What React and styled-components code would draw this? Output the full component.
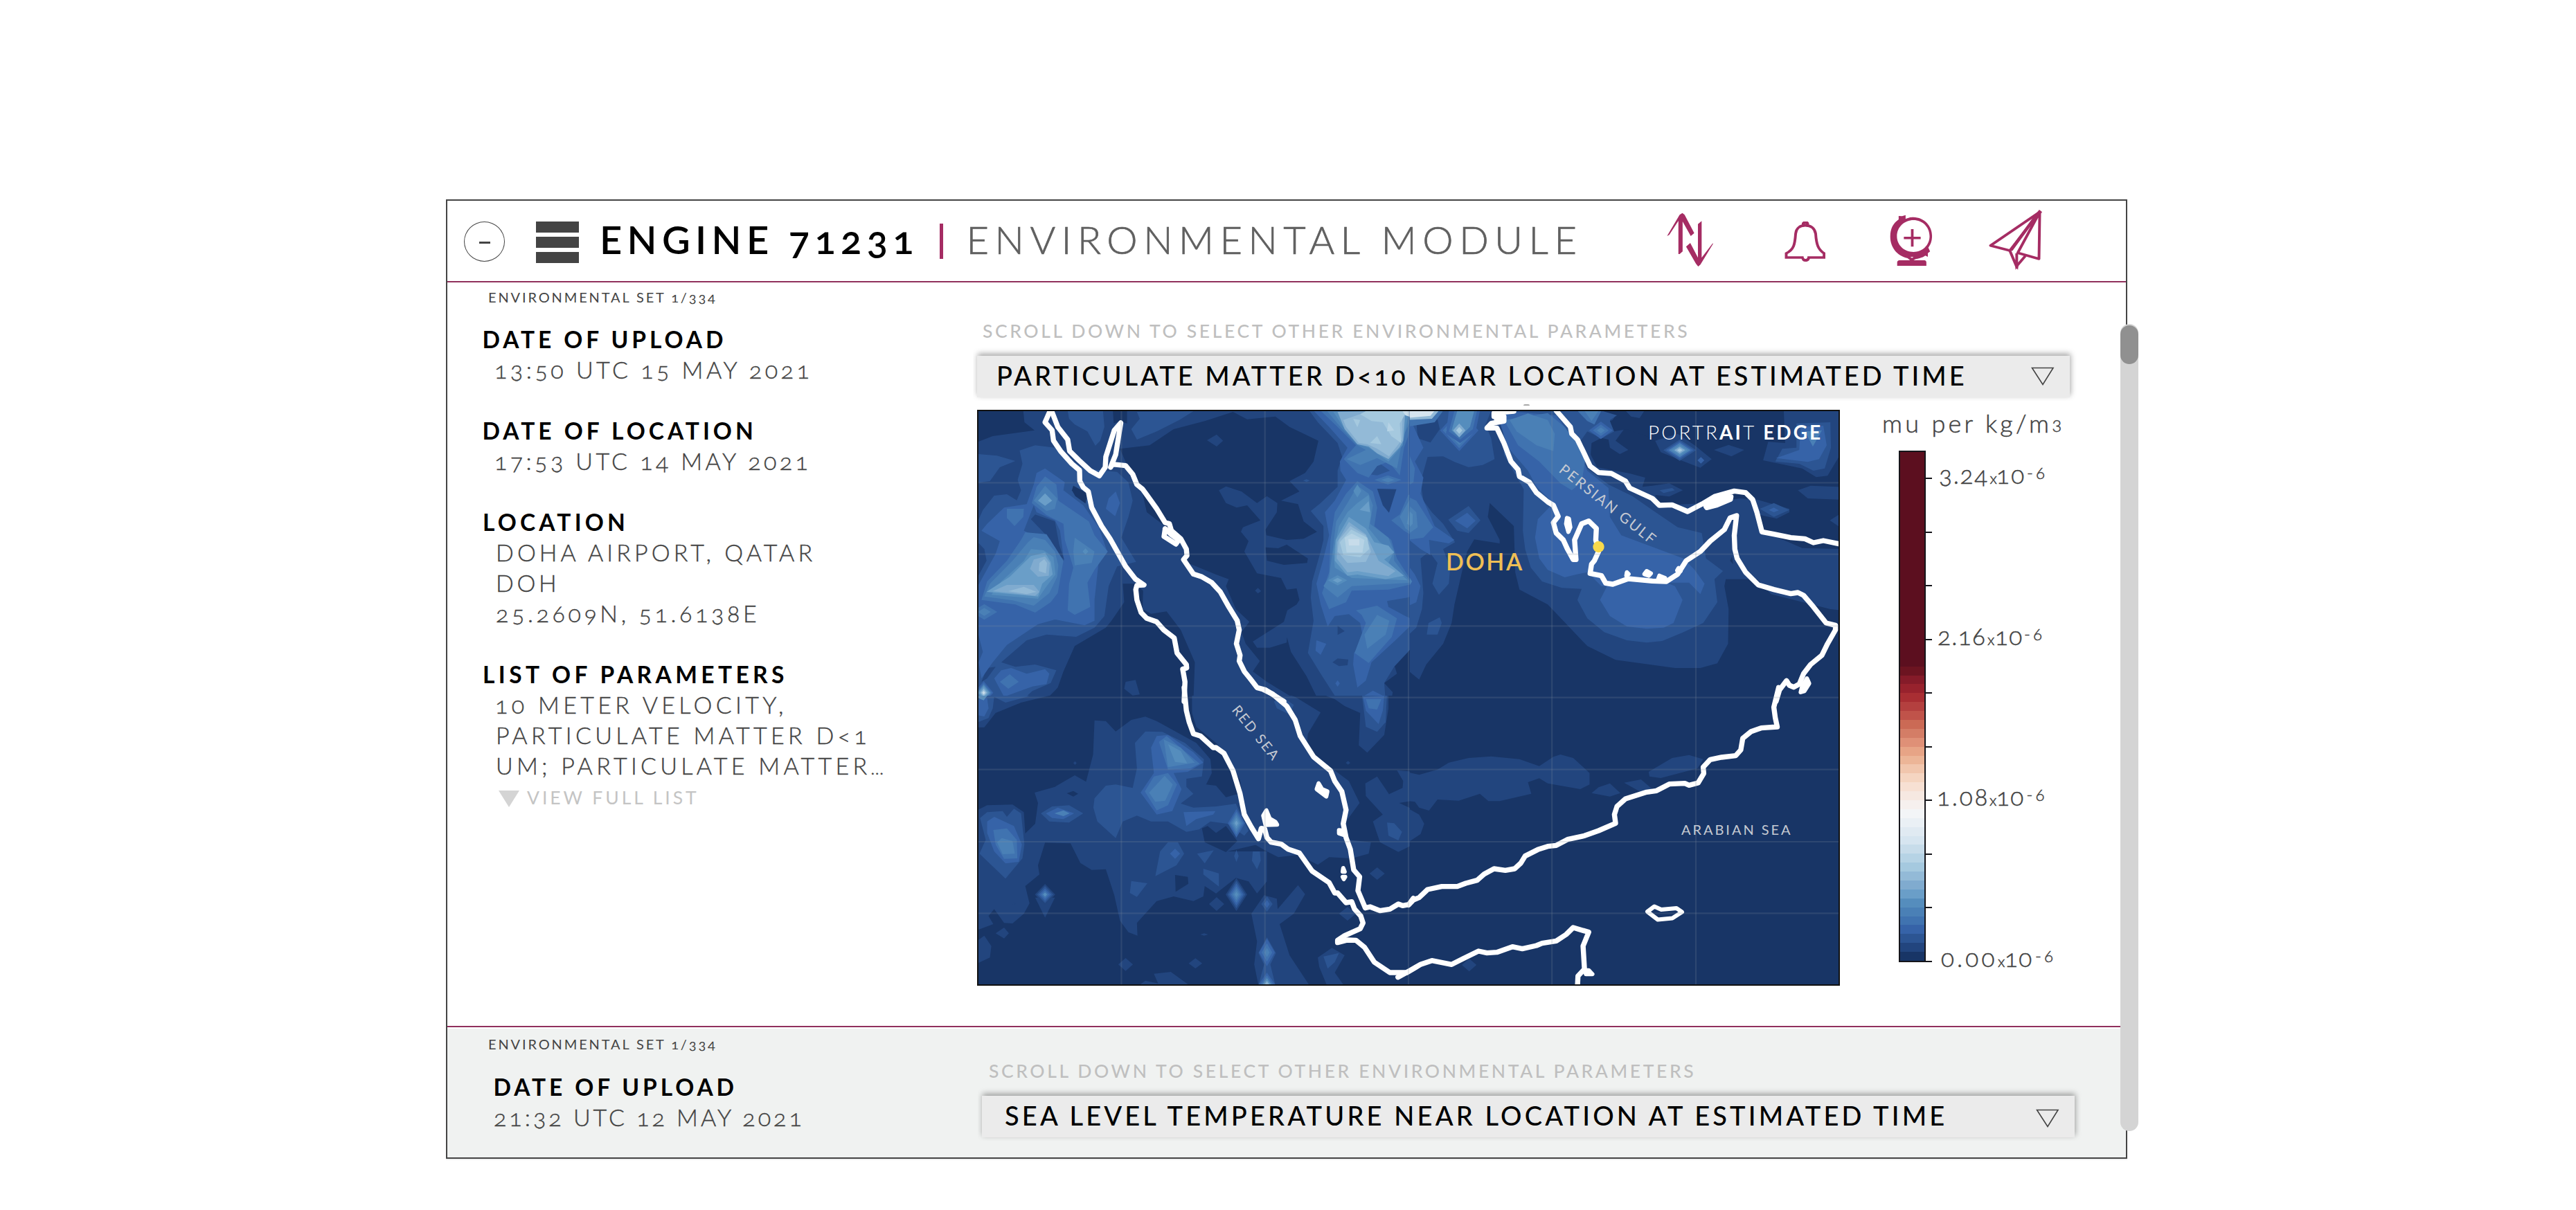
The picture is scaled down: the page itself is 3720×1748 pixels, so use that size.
import React from "react";
import styled, { createGlobalStyle } from "styled-components";

const Global = createGlobalStyle`
  *, *::before, *::after { box-sizing: border-box; }
  body { margin: 0; background: #fff; }
`;

const FONT = 'Lato, "Open Sans", sans-serif';
const MAGENTA = "#a52c63";
const RULE = "#90305c";
const INK = "#444";

const Page = styled.main`
  width: 3720px;
  height: 1748px;
  padding: 288px 0 0 644px;
  overflow: hidden;
  background: #fff;
  font-family: ${FONT};
  font-variant-numeric: oldstyle-nums;
  font-kerning: normal;
`;

const Card = styled.section`
  position: relative;
  display: flex;
  flex-direction: column;
  width: 2428px;
  height: 1386px;
  border: 2px solid ${INK};
  box-shadow: 0 2px 0 #f0f1f1;
`;

const Text = styled.span`
  display: block;
  flex: none;
  width: ${(p) => (p.$width ? `${p.$width}px` : "max-content")};
  white-space: pre;
  font-size: ${(p) => p.$size}px;
  line-height: ${(p) => p.$line || 44}px;
  font-weight: ${(p) => p.$weight || 400};
  letter-spacing: ${(p) => p.$track || 0}px;
  color: ${(p) => p.$color || INK};
  -webkit-text-stroke: ${(p) => p.$stroke || 0}px currentColor;
  margin: ${(p) => p.$top || 0}px 0 0 ${(p) => p.$left || 0}px;
`;

const Header = styled.header`
  display: flex;
  align-items: flex-start;
  height: 118px;
  padding-left: 24px;
  border-bottom: 2px solid ${RULE};
`;

const Collapse = styled.button`
  display: grid;
  place-items: center;
  width: 59px;
  height: 58px;
  margin: 30px 45px 0 0;
  padding: 0;
  border: 1.5px solid ${INK};
  border-radius: 50%;
  background: none;
  &::after {
    content: "";
    width: 16px;
    height: 3px;
    margin-top: 3px;
    background: ${INK};
  }
`;

const Burger = styled.div`
  display: grid;
  gap: 6px;
  width: 62px;
  margin-top: 30px;
`;

const BurgerBar = styled.i`
  height: 16px;
  background: ${INK};
`;

const Divider = styled.i`
  width: 5px;
  height: 51px;
  margin: 33px 0 0 ${(p) => p.$left}px;
  background: ${MAGENTA};
`;

const Icons = styled.nav`
  display: flex;
  margin: 13px 0 0 ${(p) => p.$left}px;
`;

const IconSvg = styled.svg`
  flex: none;
  margin-right: ${(p) => p.$gap}px;
  color: ${MAGENTA};
`;

const Panel = styled.div`
  display: flex;
  height: ${(p) => p.$height}px;
  background: ${(p) => p.$bg || "#fff"};
`;

const SectionRule = styled.div`
  height: 4px;
  border-top: 2px solid ${RULE};
`;

const Details = styled.div`
  flex: none;
  width: ${(p) => p.$width}px;
  padding-top: ${(p) => p.$top}px;
`;

const Fields = styled.div`
  display: grid;
  row-gap: 44px;
  margin-top: ${(p) => p.$top}px;
`;

const Block = styled.section`
  display: flex;
  flex-direction: column;
`;

const Ellipsis = styled.span`
  font-size: 26px;
  line-height: 0;
  letter-spacing: 0;
`;

const MoreRow = styled.div`
  display: flex;
  align-items: flex-start;
  height: 44px;
  padding-left: 74px;
`;

const MoreArrow = styled.svg`
  margin-top: 14px;
`;

const Data = styled.div`
  display: flex;
  flex-direction: column;
  padding-top: ${(p) => p.$top}px;
`;

const Select = styled.div`
  display: flex;
  justify-content: space-between;
  width: 1578px;
  height: 60px;
  margin-top: 20px;
  padding-right: 22px;
  background: #ebebeb;
  box-shadow: 1px -3px 8px rgba(0, 0, 0, 0.36);
  clip-path: inset(-14px -10px -6px -6px);
`;

const CaretSvg = styled.svg`
  margin-top: ${(p) => p.$top}px;
`;

const Chart = styled.div`
  position: relative;
  display: flex;
  margin-top: 18px;
  &::before {
    content: "";
    position: absolute;
    left: 789px;
    top: -8px;
    width: 9px;
    height: 2px;
    border-radius: 2px 2px 0 0;
    background: #a8a8a8;
  }
`;

const MapSvg = styled.svg`
  display: block;
  flex: none;
  width: 1246px;
  height: 832px;
  border: 2px solid #111;
  background: #183566;
`;

const Legend = styled.aside`
  display: flex;
  flex-direction: column;
  padding-left: 61px;
`;

const LegendTitle = styled.div`
  display: flex;
  height: 59px;
`;

const Scale = styled.div`
  display: flex;
  margin-left: 24px;
`;

const Bar = styled.div`
  display: flex;
  flex-direction: column;
  width: 39px;
  height: 739px;
  border: 2px solid #15151a;
`;

const Band = styled.i`
  flex: ${(p) => p.$grow} 0 0;
  background: ${(p) => p.$color};
`;

const Ticks = styled.div`
  display: flex;
  flex-direction: column;
  justify-content: space-between;
  padding-top: 40px;
  height: 738px;
`;

const Tick = styled.div`
  display: flex;
  align-items: center;
  height: 0;
  &::before {
    content: "";
    flex: none;
    width: 9px;
    height: 2px;
    background: #15151a;
  }
`;

const TickLabel = styled.div`
  display: flex;
  height: 44px;
  margin-bottom: 12px;
  align-items: flex-start;
`;

const Track = styled.div`
  position: absolute;
  top: 178px;
  right: -18px;
  width: 26px;
  height: 1166px;
  border-radius: 13px;
  background: #d4d4d4;
`;

const Thumb = styled.div`
  width: 26px;
  height: 56px;
  margin-top: 2px;
  border-radius: 13px;
  background: #909090;
`;

/* ---------- colour scale ---------- */
const BANDS = [
  "#6c1421", "#851b29", "#98222d", "#a92e33", "#b4403f", "#c0534a", "#cb6a55", "#d47d66",
  "#df9077", "#e7a486", "#ecb597", "#f1c6ad", "#f5d5c1", "#f7e0d3", "#f6e8e1", "#f6f0ee",
  "#f3f5f7", "#eaf0f5", "#e0eaf2", "#d6e5f0", "#c7dcea", "#b6d3e5", "#a5c9df", "#93bad7",
  "#80abcf", "#6a9ec8", "#558dbd", "#4a80b6", "#4073b0", "#3663a8", "#2c5593", "#22457e",
  "#183566",
];
const level = (n) => BANDS[BANDS.length - 1 - n];

/* ---------- contour data: one list per sheet of the map ---------- */
const dia = (cx, cy, rx, ry, levels) =>
  levels.map((l, i) => {
    const k = 1 - i / levels.length;
    return [l, `${cx - rx * k},${cy} ${cx},${cy - ry * k} ${cx + rx * k},${cy} ${cx},${cy + ry * k}`];
  });

const NW = [
  [1, "0,0 1568,0 1568,1300 0,1300"],
  [0, "27,40 188,40 192,90 228,125 80,150 27,175"],
  [0, "930,45 980,77 1080,65 1130,110 1232,170 1215,260 1185,310 1130,345 1165,390 1100,430 1160,445 1180,520 1227,565 1180,595 1120,600 1048,580 1045,555 1085,480 1087,440 1050,410 1015,440 960,390 905,368 880,385 905,440 943,460 980,450 1027,515 965,545 958,565 985,605 970,650 1015,745 1100,765 1120,815 1155,810 1165,860 1155,880 1122,905 1110,955 1000,1040 1015,1067 1060,1067 1120,1045 1121,1022 1135,1085 1190,1190 1230,1290 1150,1290 1050,1215 1000,1170 1025,1125 975,1050 960,1000 988,955 940,900 905,800 915,770 870,750 770,700 760,610 710,560 625,480 610,400 560,290 530,205 635,190 720,120 830,85"],
  [0, "540,790 545,870 500,950 480,980 370,1060 330,1170 310,1240 270,1290 790,1290 795,1130 745,990 695,910 640,920 610,900 612,820 580,790"],
  [0, "1568,1060 1500,1140 1510,1180 1465,1220 1495,1260 1490,1300 1568,1300"],
  [1, "838,168 872,143 895,170 872,195"],
  [1, "1008,820 1018,808 1030,822 1018,832"],
  [0, "1045,632 1090,636 1120,620 1195,680 1192,700 1110,708 1050,690"],
  [1, "550,1215 585,1207 600,1270 575,1274 545,1245"],
  [2, "27,228 95,235 160,258 105,285 70,345 27,352"],
  [2, "175,212 230,190 300,200 400,290 520,305 560,350 575,430 560,500 535,590 587,695 520,715 490,800 475,930 440,980 375,1020 270,1010 200,1035 110,1130 160,1150 230,1140 305,1165 285,1220 220,1255 180,1300 27,1300 27,520 45,470 85,408 130,402 165,428 180,385 168,340 185,270"],
  [1, "27,610 50,640 58,690 27,760"],
  [1, "27,990 50,998 27,1015"],
  [1, "60,1155 90,1150 60,1200 40,1215"],
  [2, "345,40 470,40 475,110 460,170 443,192 415,130 370,100 350,75"],
  [2, "600,75 590,45 790,42 740,80 660,130 590,165 570,120"],
  [0, "505,40 555,40 555,95 530,85 508,95"],
  [0, "365,365 395,385 415,400 408,442 372,410 360,385"],
  [3, "265,290 335,350 330,385 400,450 455,545 485,650 455,690 440,860 440,950 405,970 300,945 240,965 130,1055 80,1130 40,1200 30,1130 45,1085 27,1000 27,800 90,660 105,605 40,560 60,530 120,460 200,445 225,360 235,310"],
  [2, "225,450 235,480 300,515 318,560 332,690 300,720 265,660 262,600 190,560"],
  [1, "215,510 230,490 300,520 315,620 333,686 305,655 285,600"],
  [3, "515,390 530,440 513,497 480,465 490,420"],
  [4, "265,325 305,360 312,430 420,520 440,580 487,650 440,730 415,785 425,890 370,925 345,905 350,790 365,720 335,600 330,530 270,492 218,440 235,370"],
  [4, "130,465 190,465 188,500 157,540 130,505"],
  [4, "195,567 270,575 310,650 330,690 320,760 310,830 285,870 230,915 160,880 40,860 60,780 130,690 180,600"],
  [5, "225,588 265,600 300,650 312,710 308,760 280,830 225,885 150,862 50,845 70,790 150,690 205,610"],
  [5, "370,590 440,650 430,700 370,710 365,650"],
  [5, "265,365 308,420 300,465 270,475 225,430"],
  [6, "260,645 295,675 302,750 265,810 240,855 75,838 110,780 190,690 215,640"],
  [7, "265,655 285,695 292,750 255,790 240,845 58,825 140,760 215,670"],
  [7, "265,398 290,430 265,452 240,430"],
  [8, "265,672 282,700 278,755 240,760 212,725 225,685"],
  [8, "80,822 130,795 225,795 245,825 230,842"],
  [9, "262,683 272,700 268,745 243,735 245,700"],
  [9, "135,822 190,803 235,825 200,835"],
  ...dia(50, 912, 46, 34, [4, 5]),
  ...dia(408, 650, 10, 14, [6]),
  [3, "85,1200 110,1165 145,1155 200,1180 265,1160 280,1180 270,1225 220,1235 120,1280"],
  [4, "105,1215 140,1182 172,1215 135,1245"],
  ...dia(48, 1262, 34, 50, [3, 4, 6, 7, 9, 12]),
  [2, "1200,40 1230,90 1300,180 1316,240 1300,300 1300,370 1240,440 1205,475 1250,540 1250,600 1240,650 1210,780 1205,850 1215,950 1195,1090 1240,1180 1290,1275 1350,1300 1470,1300 1465,1220 1500,1150 1568,1060 1568,40"],
  [3, "1215,40 1270,110 1335,200 1308,260 1310,300 1330,340 1290,430 1255,480 1270,580 1250,680 1225,790 1240,880 1265,975 1290,930 1340,922 1380,960 1392,1040 1358,1090 1355,1140 1370,1240 1400,1210 1420,1130 1500,1040 1568,960 1568,40"],
  [1, "1440,378 1508,380 1482,482 1460,450"],
  [1, "1300,972 1325,995 1300,1012"],
  [1, "1282,1130 1300,1114 1338,1118 1335,1143 1305,1147"],
  [2, "1475,865 1568,845 1568,945 1540,930 1480,890"],
  [2, "1440,260 1485,300 1440,320 1410,315"],
  [3, "1225,1035 1260,1050 1240,1098 1222,1080"],
  ...dia(1300, 1222, 8, 14, [3]),
  ...dia(1190, 343, 12, 6, [2]),
  [3, "1395,1275 1425,1253 1460,1275 1460,1300 1395,1300"],
  [4, "1240,40 1300,110 1365,190 1322,250 1370,310 1410,330 1440,280 1480,260 1520,320 1535,200 1550,150 1568,40"],
  [4, "1370,345 1425,390 1440,460 1430,540 1490,600 1510,680 1568,790 1480,815 1350,820 1330,870 1270,900 1245,830 1270,740 1275,600 1290,480 1330,400"],
  ...dia(1478, 340, 48, 20, [4, 5]),
  [5, "1262,40 1310,110 1370,190 1400,210 1332,250 1380,275 1440,245 1510,290 1532,150 1568,60 1568,40"],
  [5, "1370,365 1410,400 1425,450 1415,530 1480,590 1500,650 1500,690 1560,785 1350,800 1300,850 1250,800 1270,760 1283,640 1295,520 1340,430"],
  [6, "1285,45 1320,110 1370,185 1410,200 1450,235 1480,260 1530,190 1550,60 1568,40"],
  [6, "1335,480 1370,440 1410,405 1418,490 1410,550 1450,610 1500,650 1480,700 1548,775 1350,765 1290,720 1285,650 1305,540"],
  ...dia(1370, 388, 14, 28, [6]),
  [7, "1340,500 1400,550 1430,610 1480,625 1500,655 1465,685 1535,755 1470,770 1370,750 1335,755 1290,690 1293,600"],
  [7, "1410,432 1415,480 1378,470"],
  ...dia(1300, 775, 34, 22, [6, 7]),
  [8, "1340,522 1400,575 1430,650 1445,690 1505,735 1480,757 1370,735 1335,740 1297,680 1298,610"],
  [9, "1345,540 1400,580 1418,650 1400,695 1335,700 1300,650 1305,600"],
  [10, "1348,555 1405,590 1412,640 1380,675 1320,665 1308,610"],
  [11, "1350,572 1395,600 1388,655 1332,655 1325,590"],
  [12, "1338,596 1377,596 1377,624 1340,624"],
  [8, "1300,45 1540,40 1532,170 1518,200 1480,250 1440,225 1410,195 1370,185 1325,120"],
  [9, "1320,80 1380,55 1530,45 1528,165 1482,238 1440,205 1405,185 1375,180 1330,110"],
  [10, "1380,55 1400,42 1545,42 1520,95 1525,180 1490,150 1460,90 1420,85"],
  [10, "1355,75 1380,80 1370,112"],
  [10, "1440,150 1455,185 1415,180"],
  [11, "1480,90 1500,125 1475,130"],
  [12, "1530,42 1568,42 1568,72 1540,60"],
  [4, "1550,405 1568,400 1568,585 1535,560 1490,515 1520,490"],
  [5, "1555,425 1568,425 1568,575 1540,550 1520,500"],
  [6, "1555,460 1568,455 1568,545 1545,530"],
  [4, "1365,905 1440,885 1510,940 1492,1020 1410,1133 1360,1090 1400,960 1385,925"],
  [5, "1440,925 1483,950 1470,1010 1405,1072 1395,1010"],
];

const NE = [
  [0, "0,0 1568,0 1568,1300 0,1300"],
  [1, "0,40 690,40 740,60 720,100 770,120 740,170 785,210 755,228 720,200 715,165 690,158 655,180 652,230 675,285 790,312 845,330 835,370 870,365 930,355 978,385 930,412 880,405 900,450 1070,440 1180,420 1240,425 1355,465 1355,480 1310,508 1245,490 1260,560 1400,635 1568,640 1568,908 1500,900 1290,835 1240,770 1130,770 1125,800 1140,900 1138,1050 1100,1135 1040,1155 950,1155 740,1120 640,1060 570,970 500,880 400,815 385,740 380,540 295,440 288,500 330,600 330,615 240,598 215,650 200,720 170,880 160,960 130,1050 70,1140 45,1205 0,1160"],
  [2, "0,40 300,40 280,100 300,160 312,250 270,275 220,285 170,262 130,238 75,240 50,350 60,430 90,480 130,530 172,610 130,640 155,720 150,790 115,838 92,790 110,700 80,650 50,680 60,830 55,900 35,980 0,1020"],
  [1, "35,85 110,78 118,120 85,178 40,160"],
  [2, "340,40 690,40 745,60 720,80 735,130 690,160 640,130 605,190 640,290 715,360 800,410 870,470 960,545 1045,570 1060,680 1120,735 1090,770 1100,870 1050,960 980,1000 905,1038 850,1045 780,1035 700,1000 640,940 605,860 620,812 550,808 480,780 440,720 420,640 412,560 415,380 345,230"],
  [3, "330,90 360,200 430,300 460,370 520,440 465,510 455,590 470,680 500,730 560,762 600,750 640,740 690,800 710,800 685,860 720,930 780,975 850,985 910,980 945,960 977,860 950,800 920,785 1000,785 1040,835 1055,790 1020,730 980,680 870,630 760,580 720,500 715,375 640,300 600,180 530,60 340,40"],
  [4, "345,80 500,50 560,110 615,200 632,260 620,350 585,385 545,355 470,260 395,190"],
  [5, "365,80 430,52 500,80 525,140 520,215 460,190 390,130"],
  ...dia(187, 125, 68, 90, [3, 4, 5, 6, 7, 9, 10]),
  [3, "150,40 260,40 245,130 190,180 140,140"],
  [4, "170,40 250,40 235,120 190,165 150,130"],
  [6, "180,40 240,40 225,110 187,155 160,125"],
  ...dia(187, 125, 22, 30, [8, 10]),
  [2, "148,512 220,453 262,515 220,570 180,560"],
  [3, "172,517 215,482 245,517 215,550"],
  [3, "0,40 60,200 30,260 60,330 50,400 100,540 170,600 150,615 80,600 85,665 50,640 0,590"],
  [3, "0,700 30,750 50,800 35,870 0,890"],
  [4, "0,200 30,290 25,350 0,370"],
  [4, "0,410 35,430 95,545 60,590 0,600"],
  [5, "0,440 35,480 40,545 0,580"],
  [6, "0,460 22,490 22,530 0,560"],
  [5, "0,740 20,780 0,820"],
  [2, "72,1010 78,960 118,935 125,960 110,1010"],
  [4, "0,40 130,40 100,90 0,110"],
  [9, "0,40 115,40 90,75 0,80"],
  [13, "0,40 100,40 85,62 0,72"],
  [4, "605,40 690,40 665,100 640,85"],
  [5, "630,40 680,40 655,85"],
  ...dia(688, 125, 42, 38, [3, 4, 5]),
  [0, "745,40 1335,40 1335,150 960,135 870,160 780,120 735,130 720,85 755,70"],
  [1, "880,170 960,140 1020,190 1080,250 1040,287 960,250 900,220"],
  ...dia(967, 211, 58, 46, [2, 3, 5, 6, 8, 10]),
  ...dia(1042, 255, 12, 14, [3]),
  [1, "1088,210 1140,188 1195,210 1150,238"],
  [1, "775,40 842,40 825,72 795,65"],
  [1, "1335,40 1530,40 1530,240 1490,322 1450,328 1400,290 1262,255 1280,175 1340,180"],
  [2, "1380,95 1500,90 1502,200 1480,290 1440,300 1390,270 1305,260 1330,205 1380,200"],
  [3, "1395,110 1475,105 1487,190 1460,250 1420,262 1308,245 1390,210"],
  [5, "1410,130 1470,125 1438,195"],
  [1, "1385,385 1430,365 1530,370 1530,425 1420,420"],
  [1, "1498,515 1530,490 1530,542"],
  [2, "1250,465 1300,440 1355,470 1300,500"],
  [3, "1282,470 1300,460 1318,472 1300,480"],
  [2, "895,385 940,375 950,385 910,397"],
  [0, "1145,690 1152,672 1156,705"],
];

const SW = [
  [0, "0,0 1568,0 1568,1300 0,1300"],
  [1, "785,0 1100,0 1150,20 1240,88 1195,180 1190,240 1280,330 1340,385 1378,480 1330,560 1340,640 1418,650 1410,700 1350,720 1270,715 1230,748 1160,705 1090,715 1050,690 1000,655 1000,600 970,500 955,380 910,280 870,220 800,150 785,90"],
  [1, "440,122 480,125 515,170 570,120 620,106 660,125 800,220 850,290 855,350 835,400 870,405 905,455 950,440 975,560 1020,600 1035,655 910,690 1050,690 1050,820 1015,872 985,820 940,805 870,872 830,840 825,885 790,905 720,885 660,905 590,1000 592,1055 560,1040 530,990 510,880 480,767 430,770 390,740 355,655 265,652 240,750 245,790 195,840 210,915 190,960 150,1002 120,1000 85,940 65,970 82,1005 27,1030 27,510 60,490 150,487 190,520 195,612 230,570 240,480 228,435 300,410 370,360 410,388 435,270"],
  [0, "820,590 840,580 870,610 905,580 945,645 905,693 830,650"],
  [0, "725,792 770,800 772,830 727,865"],
  [0, "342,438 365,428 382,440 365,452"],
  [1, "27,0 300,0 290,12 180,45 90,90 50,152 27,152"],
  [2, "27,0 240,0 200,20 125,45 85,20 80,70 65,112 27,130"],
  [3, "27,30 60,25 65,70 50,105 27,100"],
  [6, "27,0 70,0 48,35 27,25"],
  [2, "436,500 440,460 480,405 515,400 575,415 590,330 583,220 620,170 680,172 760,220 827,290 820,365 765,375 765,410 790,440 745,482 790,500 870,495 940,483 985,600 970,622 910,570 850,560 810,595 765,605 700,560 640,560 590,535 540,560 515,632 450,560"],
  [3, "640,240 660,190 700,185 790,260 825,305 770,345 720,350 748,420 715,515 660,530 603,435 650,350"],
  [4, "668,215 695,190 812,310 780,330 700,335"],
  [5, "685,205 745,240 795,305 700,325"],
  [6, "700,225 745,255 768,308 725,302"],
  [4, "618,430 650,365 700,350 732,400 700,490 660,512"],
  [5, "633,435 688,362 717,400 690,470 655,475"],
  [3, "755,520 868,515 860,530 800,550 765,580"],
  ...dia(942, 568, 30, 62, [3, 4, 5, 6, 7]),
  [2, "250,525 290,495 350,490 400,525 350,565 280,560"],
  [3, "268,525 310,500 368,525 330,550 290,545"],
  [5, "298,525 330,512 352,525 330,537"],
  [2, "35,545 60,520 115,515 130,540 155,505 180,525 192,660 185,720 125,808 33,700 55,640"],
  [3, "60,560 85,540 155,580 183,660 172,735 125,742 85,690 60,610"],
  [4, "82,597 130,590 165,640 167,720 120,722 90,660"],
  [5, "112,632 150,645 158,700 115,702 95,650"],
  [1, "230,890 300,890 265,977"],
  ...dia(265, 877, 36, 46, [1, 2, 3, 4, 6]),
  ...dia(942, 877, 38, 72, [1, 2, 3, 4, 5, 6]),
  [2, "672,690 700,650 735,650 757,700 730,750 655,797"],
  ...dia(725, 700, 18, 22, [3]),
  [2, "565,870 570,818 627,828 590,887"],
  [2, "803,700 862,685 830,742"],
  [2, "825,765 880,785 880,842 825,790"],
  [2, "1000,690 1025,690 1028,730 1015,768 997,730"],
  ...dia(942, 710, 8, 26, [2]),
  ...dia(872, 918, 27, 30, [1]),
  ...dia(1440, 786, 27, 27, [1]),
  ...dia(1335, 960, 30, 30, [1]),
  ...dia(1337, 306, 8, 8, [1]),
  ...dia(371, 307, 6, 8, [1]),
  ...dia(154, 917, 7, 7, [1]),
  [1, "90,1045 120,1020 137,1045 120,1067"],
  [1, "27,1075 50,1055 75,1100 70,1150 27,1174"],
  ...dia(550, 1180, 26, 28, [1]),
  ...dia(797, 1175, 24, 22, [1]),
  ...dia(828, 1050, 14, 5, [1]),
  [1, "1040,880 1085,895 1088,940 1160,836 1185,875 1145,960 1095,1005 1130,1140 1200,1270 1020,1270 1005,1180 1015,1080 995,960"],
  ...dia(1050, 918, 20, 34, [2, 3]),
  [2, "1050,1062 1082,1130 1062,1180 1080,1270 1020,1270 1040,1180 1020,1130"],
  ...dia(1050, 1128, 28, 60, [3, 4, 5]),
  ...dia(1050, 1275, 34, 60, [3, 4, 6, 8, 10]),
  [1, "650,1220 710,1212 775,1270 598,1270 620,1250 665,1262"],
  [1, "1230,1150 1280,1108 1325,1140 1290,1215 1322,1270 1262,1270 1235,1190"],
  [2, "1250,1145 1305,1130 1290,1170 1265,1198"],
  [1, "1225,0 1568,0 1568,-10 1480,0 1480,70 1465,185 1405,262 1375,230 1380,90 1325,60 1290,30"],
  [2, "1385,0 1475,0 1470,130 1440,172 1400,150"],
  [3, "1390,20 1465,15 1460,80 1445,138 1400,80"],
  [4, "1400,30 1455,30 1440,75 1410,70"],
  [1, "1398,395 1440,365 1482,442 1530,415 1532,385 1510,338 1568,345 1568,660 1515,692 1450,650 1425,560 1460,530 1400,450"],
  [0, "1518,480 1568,470 1568,508"],
  [2, "1475,565 1500,568 1528,605 1515,642 1480,622"],
  [2, "1075,40 1110,25 1145,55 1130,97 1085,70"],
];

const SE = [
  [0, "0,0 1568,0 1568,1300 0,1300"],
  [1, "0,345 45,358 110,335 150,305 220,285 300,278 400,290 470,320 520,280 545,270 590,285 648,350 648,400 615,420 500,395 470,373 430,390 442,440 330,472 290,472 260,440 185,470 110,465 80,513 45,500 30,475 0,470"],
  [1, "0,500 45,530 63,570 50,615 0,655"],
  [1, "655,437 680,412 720,395 757,437 720,452"],
  [1, "770,392 830,378 870,420 860,445 825,430"],
  [1, "857,345 940,285 1000,272 1050,290 1030,330 900,372 860,365"],
  ...dia(222, 1182, 26, 28, [1]),
];

const COAST = {
  nw: [
    "283,40 265,90 290,125 295,170 320,215 360,270 387,298 388,345 400,372 418,390 430,460 465,540 495,595 550,715 585,770 615,795 590,797 586,815 590,860 605,915 625,940 660,955 685,990 722,1025 732,1090 765,1140 766,1155 752,1160 760,1215 757,1300",
    "288,40 310,110 345,165 352,215 385,255 425,300 457,322 478,285 480,240 510,125 533,93 515,230 497,285 503,272 550,278 575,315 590,360 610,380 625,405 660,465 690,525 705,530 712,560 745,595 765,640 767,668 755,685 790,748 820,760 855,785 885,825 915,890 945,950 952,990 942,1050 955,1100 952,1125 970,1170 990,1200 1015,1240 1045,1250 1110,1300",
    "690,552 686,585 728,618 738,600 710,575 690,552",
  ],
  ne: [
    "1308,1300 1320,1250 1345,1210 1355,1230 1370,1238 1390,1225 1405,1180 1430,1140 1470,1100 1490,1050 1518,990 1518,970 1485,960 1440,890 1405,840 1385,828 1360,833 1300,815 1245,795 1200,740 1170,680 1162,640 1160,580 1168,495 1145,505 1125,555 1075,605 1040,650 990,690 960,748 920,780 870,778 785,768 730,792 705,787 690,755 650,745 655,705 665,690 680,650 670,600 672,550 645,518 620,530 595,600 600,685 590,685 570,640 555,600 530,570 520,525 537,498 520,450 500,435 460,395 435,350 400,325 395,295 370,260 345,180 320,115 285,115 300,95 345,85 345,65 310,65 310,50 380,42",
    "530,40 580,110 585,140 605,165 625,215 650,280 680,308 725,312 775,345 790,375 870,420 895,450 940,448 995,477 1045,445 1090,412 1160,388 1200,395 1225,425 1240,480 1258,565 1300,575 1360,590 1410,595 1440,612 1475,603 1530,617",
  ],
  sw: [
    "757,-20 765,80 775,130 790,180 815,190 860,240 870,240 898,265 930,340 955,440 970,530 995,585 1020,635 1030,590 1042,592 1050,630 1065,650 1100,658 1125,680 1165,697 1210,775 1270,825 1290,870 1300,870 1330,912 1350,908 1360,940 1382,970 1390,1000 1380,1025 1325,1055 1300,1075 1300,1085 1335,1074 1365,1075 1395,1105 1430,1170 1485,1215 1545,1215 1580,1190",
    "1040,-10 1070,8 1120,60 1150,120 1168,190 1215,280 1275,340 1290,385 1315,430 1330,510 1320,570 1330,630 1345,680 1357,770 1378,800 1372,860 1398,935 1415,930 1450,947 1485,940 1515,918 1530,925 1552,920 1568,893",
  ],
  se: [
    "8,922 25,900 45,890 75,855 125,842 180,842 210,828 250,815 275,788 310,765 350,772 383,765 405,740 420,710 465,682 500,668 530,664 570,638 630,622 680,600 740,568 736,530 745,495 775,462 850,433 885,427 930,398 985,395 1000,403 1032,393 1052,352 1050,325 1075,292 1115,282 1165,275 1183,250 1190,200 1220,170 1255,155 1312,150 1305,110 1300,65 1317,-20",
    "-30,1235 0,1215 50,1180 90,1163 160,1180 200,1155 255,1122 285,1130 320,1127 375,1103 410,1112 460,1098 480,1088 530,1078 565,1050 590,1020 645,1040 625,1100 630,1200 607,1230 605,1280",
  ],
};

const ISLES = {
  nw: [],
  ne: [
    "1058,455 1085,425 1110,415 1150,412 1148,425 1100,450 1062,462",
    "568,505 565,530 573,565 580,545 575,508",
    "780,740 786,748 778,755",
    "850,735 865,745 858,755 842,748",
    "895,755 915,765 890,772",
    "1417,1200 1400,1235 1395,1260 1408,1255 1425,1222",
    "963,722 970,735 958,732",
    "310,50 340,55 335,85 318,80",
  ],
  sw: [
    "1233,395 1226,420 1260,452 1264,430 1245,420",
    "1048,512 1037,535 1045,575 1086,574 1080,562 1060,548",
    "1305,598 1305,612 1325,620 1320,600",
    "1320,762 1325,778 1318,778",
    "1318,800 1327,800 1322,810",
  ],
  se: ["632,1205 645,1205 658,1222 635,1222"],
};

const SHEETS = [
  { id: "nw", x: 1400, y: 580, shapes: NW, clip: [0, 0, 1556, 1276] },
  { id: "ne", x: 2030, y: 580, shapes: NE, clip: [12, 0, 1560, 1276] },
  { id: "sw", x: 1400, y: 1000, shapes: SW, clip: [0, 15, 1556, 1300] },
  { id: "se", x: 2030, y: 1000, shapes: SE, clip: [12, 15, 1560, 1300] },
];
const place = (s) => `translate(${s.x} ${s.y}) scale(0.40816 0.33333)`;

const ContourMap = () => (
  <MapSvg viewBox="1412 594 1242 828" preserveAspectRatio="none">
    <defs>
      {SHEETS.map((s) => (
        <clipPath id={`sheet-${s.id}`} key={s.id}>
          <rect x={s.clip[0]} y={s.clip[1]} width={s.clip[2] - s.clip[0]} height={s.clip[3] - s.clip[1]} />
        </clipPath>
      ))}
    </defs>
    {SHEETS.map((s) => (
      <g key={s.id} transform={place(s)}>
        <g clipPath={`url(#sheet-${s.id})`}>
          {s.shapes.map(([l, pts], i) => (
            <polygon key={i} points={pts} fill={level(l)} />
          ))}
        </g>
      </g>
    ))}
    {SHEETS.map((s) => (
      <g
        key={s.id}
        transform={place(s)}
        stroke="#fff"
        strokeWidth="7.4"
        strokeLinejoin="round"
        strokeLinecap="round"
        fill="none"
      >
        {COAST[s.id].map((pts) => (
          <polyline key={pts} points={pts} vectorEffect="non-scaling-stroke" />
        ))}
        {ISLES[s.id].map((pts) => (
          <polygon key={pts} points={pts} fill="#fff" strokeWidth="6" vectorEffect="non-scaling-stroke" />
        ))}
      </g>
    ))}
    <polygon
      points="2388,1309.5 2378,1317 2393,1328.5 2414,1326.5 2428,1317.5 2420,1312 2398,1314"
      fill="none"
      stroke="#fff"
      strokeWidth="6"
      strokeLinejoin="round"
    />
    <g stroke="#8090a0" strokeOpacity="0.2" strokeWidth="2.2">
      {[1618.4, 1825.7, 2033, 2240.2, 2448].map((x) => (
        <line key={x} x1={x} x2={x} y1="592" y2="1424" />
      ))}
      {[697.3, 800.7, 904.3, 1007.7, 1111.7, 1216, 1319.3].map((y) => (
        <line key={y} x1="1410" x2="2656" y1={y} y2={y} />
      ))}
    </g>
    <circle cx="2307.5" cy="790" r="8.2" fill="#f8d94c" />
    <g fontFamily={FONT} fill="#c6cad2">
      <text x="2379" y="635" fontSize="28" fontWeight="300" fill="#fff" letterSpacing="3.07">
        PORTR<tspan fontWeight="700">AI</tspan>T<tspan fontWeight="700"> EDGE</tspan>
      </text>
      <text x="2087" y="823.7" fontSize="34" fontWeight="600" fill="#efbf55" letterSpacing="2.56">
        DOHA
      </text>
      <text x="2427" y="1205.7" fontSize="20" letterSpacing="2.95">
        ARABIAN SEA
      </text>
      <text transform="translate(2249 681) rotate(38.3)" fontSize="21" letterSpacing="2.4">
        PERSIAN GULF
      </text>
      <text transform="translate(1777 1026) rotate(51)" fontSize="20" letterSpacing="2.3">
        RED SEA
      </text>
    </g>
  </MapSvg>
);

/* ---------- header icons ---------- */
const Glyph = ({ x, w, gap, children }) => (
  <IconSvg $gap={gap} width={w / 2.8} height={262 / 3} viewBox={`${x} 24 ${w} 262`} preserveAspectRatio="none">
    {children}
  </IconSvg>
);

const HeaderIcons = ({ left }) => (
  <Icons $left={left}>
    <Glyph x={20} w={190} gap={102}>
      <path
        fill="currentColor"
        d="M21 138 L72 46 L83 38 L92 46 L131 125 L117 138 L84 75 V205 L72 216 H67 V72 L30 133 Z M161 73 V232 L205 170 H208 L156 262 L147 270 L138 258 L98 184 L115 168 L146 232 V86 Z"
      />
    </Glyph>
    <Glyph x={496} w={166} gap={93}>
      <path
        fill="none"
        stroke="currentColor"
        strokeWidth="11"
        d="M503 231 V213 C534 196 538 175 541 128 C543 103 560 92 580 92 C601 92 618 103 622 128 C625 175 632 196 656 213 V231 Z"
      />
      <path fill="currentColor" d="M566 97 V81 L572 75 H590 L595 81 V97 L583 96 V86 H578 V96 Z" />
      <path fill="currentColor" d="M564 233 H599 C598 243 591 249 581 249 C571 249 566 243 564 233 Z" />
      <path fill="#fff" d="M573 224 H589 C589 233 587 237 581 237 C576 237 573 233 573 224 Z" />
    </Glyph>
    <Glyph x={922} w={172} gap={81}>
      <path
        fill="currentColor"
        fillRule="evenodd"
        d="M958 51 L972 52 L986 47 V64 C1000 56 1010 56 1018 56 C1060 57 1093 92 1093 137 C1093 160 1087 175 1078 188 L1085 205 L1076 212 V228 L1066 223 C1058 230 1040 236 1027 238 L1018 243 H1062 C1067 243 1070 247 1070 252 V267 H952 V252 C952 247 956 243 961 243 H1004 L994 234 C950 222 924 186 924 140 C924 106 936 82 958 66 Z M1018 69 C982 69 951 98 951 139 C951 178 981 207 1018 207 C1054 207 1083 178 1083 139 C1083 98 1054 69 1018 69 Z"
      />
      <path fill="#fff" d="M1005 229 L1018 228 L1012 233 Z" />
      <path stroke="currentColor" strokeWidth="10.5" d="M1013 108 V184 M979 146 H1047" />
    </Glyph>
    <Glyph x={1320} w={216} gap={0}>
      <g fill="none" stroke="currentColor" strokeWidth="11" strokeLinejoin="round">
        <path d="M1526 34 L1327 179 L1405 201 L1526 34 L1523 237 L1437 211 L1526 34" />
        <path d="M1405 201 L1433 272 V213 M1433 268 L1468 224" />
      </g>
      <path fill="currentColor" d="M1524 24 L1503 52 L1400 202 L1416 202 L1513 60 L1536 34 Z M1427 262 H1440 L1438 284 L1433 278 L1428 284 Z" />
    </Glyph>
  </Icons>
);

const Caret = ({ top }) => (
  <CaretSvg $top={top} width="34" height="28" viewBox="0 0 34 28">
    <path d="M1.5 1.5 H32 L17 25.5 Z" fill="none" stroke={INK} strokeWidth="1.6" />
  </CaretSvg>
);

const Hint = ({ left }) => (
  <Text $size={26.5} $line={32} $weight={500} $left={left} $color="#bfbfbf" $track={3.6}>
    SCROLL DOWN TO SELECT OTHER ENVIRONMENTAL PARAMETERS
  </Text>
);
const SetLabel = () => (
  <Text $size={20} $line={24} $left={59} $track={2.87}>
    ENVIRONMENTAL SET 1/334
  </Text>
);
const Title = ({ left = 50.5, track, children }) => (
  <Text $size={33.5} $weight={700} $left={left} $track={track} $color="#000">
    {children}
  </Text>
);
const Line = ({ left = 70, track, children }) => (
  <Text $size={34} $weight={300} $left={left} $track={track} $stroke={0.4}>
    {children}
  </Text>
);
const Option = ({ left, track, children }) => (
  <Text $size={38} $line={56} $left={left} $weight={500} $color="#000" $track={track}>
    {children}
  </Text>
);
const Unit = (props) => <Text $weight={300} $stroke={0.5} {...props} />;

const LABELS = [
  { value: "3.24", left: 10, track: 1.74, gap: 1.7, pull: -0.9, ten: 2.5, lift: 1.2 },
  { value: "2.16", left: 8, track: 1.31, gap: 1.9, pull: 0.6, ten: 1.5, lift: 1.2 },
  { value: "1.08", left: 7, track: 2.81, gap: -0.1, pull: -0.4, ten: 1.5, lift: 2.7 },
  { value: "0.00", left: 13, track: 4.14, gap: 0.6, pull: -0.4, ten: 1.5, lift: 3.2 },
];

export default function App() {
  return (
    <Page>
      <Global />
      <Card>
        <Header>
          <Collapse aria-label="Collapse" />
          <Burger>
            <BurgerBar />
            <BurgerBar />
            <BurgerBar />
          </Burger>
          <Text $size={56} $line={60} $top={25.5} $left={30} $width={455} $weight={600} $color="#000" $track={7.36}>
            ENGINE 71231
          </Text>
          <Divider $left={35.5} />
          <Text $size={56} $line={60} $top={25.5} $left={34} $width={890} $weight={300} $stroke={0.7} $color="#606060" $track={8.58}>
            ENVIRONMENTAL MODULE
          </Text>
          <HeaderIcons left={121.5} />
        </Header>

        <Panel $height={1074}>
          <Details $width={765} $top={9}>
            <SetLabel />
            <Fields $top={27}>
              <Block>
                <Title track={4.94}>DATE OF UPLOAD</Title>
                <Line left={68} track={4.51}>13:50 UTC 15 MAY 2021</Line>
              </Block>
              <Block>
                <Title track={5.01}>DATE OF LOCATION</Title>
                <Line left={68} track={4.41}>17:53 UTC 14 MAY 2021</Line>
              </Block>
              <Block>
                <Title left={51} track={5.17}>LOCATION</Title>
                <Line track={5.06}>DOHA AIRPORT, QATAR</Line>
                <Line track={4.62}>DOH</Line>
                <Line track={4.61}>25.2609N, 51.6138E</Line>
              </Block>
              <Block>
                <Title left={51} track={5.4}>LIST OF PARAMETERS</Title>
                <Line left={69} track={5.34}>10 METER VELOCITY,</Line>
                <Line track={5.31}>{"PARTICULATE MATTER D<1"}</Line>
                <Line track={5.25}>
                  UM; PARTICULATE MATTER<Ellipsis>…</Ellipsis>
                </Line>
                <MoreRow>
                  <MoreArrow width="30" height="24" viewBox="0 0 30 24">
                    <path d="M0 0 H30 L15 24 Z" fill="#d4d4d4" />
                  </MoreArrow>
                  <Text $size={26.5} $left={11} $top={2} $track={3.95} $color="#c4c4c4">
                    VIEW FULL LIST
                  </Text>
                </MoreRow>
              </Block>
            </Fields>
          </Details>
          <Data $top={54}>
            <Hint left={8} />
            <Select>
              <Option left={28} track={3.97}>
                {"PARTICULATE MATTER D<10 NEAR LOCATION AT ESTIMATED TIME"}
              </Option>
              <Caret top={16} />
            </Select>
            <Chart>
              <ContourMap />
              <Legend>
                <LegendTitle>
                  <Unit $size={36} $line={38} $track={4.29}>mu per kg/m</Unit>
                  <Unit $size={26} $line={38}>3</Unit>
                </LegendTitle>
                <Scale>
                  <Bar>
                    <Band $grow={554} $color="#5c0f1f" />
                    {BANDS.map((c) => (
                      <Band key={c} $grow={23.06} $color={c} />
                    ))}
                  </Bar>
                  <Ticks>
                    {Array.from({ length: 10 }, (_, i) => {
                      const l = i % 3 === 0 ? LABELS[i / 3] : null;
                      return (
                        <Tick key={i}>
                          {l && (
                            <TickLabel>
                              <Unit $size={35} $left={l.left} $track={l.track}>{l.value}</Unit>
                              <Unit $size={22} $top={6} $left={l.gap}>x</Unit>
                              <Unit $size={35} $left={l.pull} $track={l.ten}>10</Unit>
                              <Unit $size={24} $left={l.lift} $track={4.1} $line={39}>-6</Unit>
                            </TickLabel>
                          )}
                        </Tick>
                      );
                    })}
                  </Ticks>
                </Scale>
              </Legend>
            </Chart>
          </Data>
        </Panel>

        <SectionRule />
        <Panel $height={186} $bg="#f0f2f1">
          <Details $width={772} $top={10}>
            <SetLabel />
            <Fields $top={28}>
              <Block>
                <Title left={66.5} track={4.91}>DATE OF UPLOAD</Title>
                <Line left={67} track={4.01}>21:32 UTC 12 MAY 2021</Line>
              </Block>
            </Fields>
          </Details>
          <Data $top={45}>
            <Hint left={10} />
            <Select>
              <Option left={33} track={4.15}>
                SEA LEVEL TEMPERATURE NEAR LOCATION AT ESTIMATED TIME
              </Option>
              <Caret top={19} />
            </Select>
          </Data>
        </Panel>
        <Track>
          <Thumb />
        </Track>
      </Card>
    </Page>
  );
}
